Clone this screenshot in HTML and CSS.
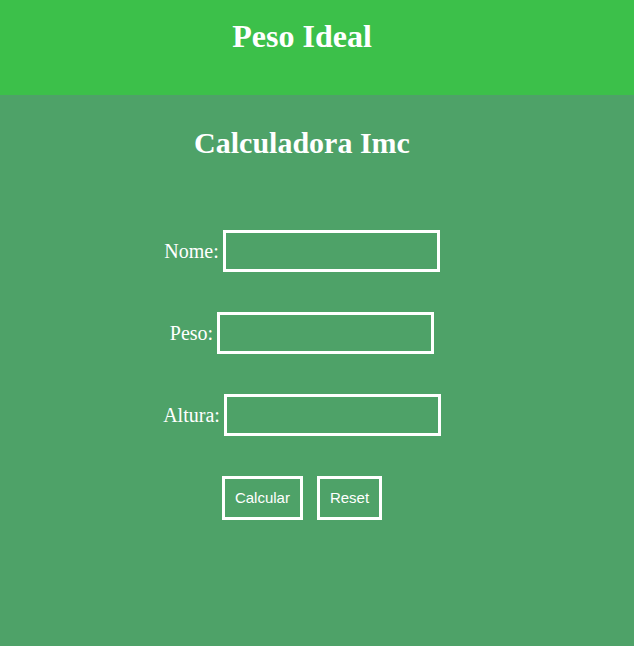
FILE: index.html
```html
<!DOCTYPE html>
<html lang="pt">
<head>
<meta charset="utf-8">
<title>Peso Ideal</title>
<link rel="stylesheet" href="styles.css">
</head>
<body>
<header class="topbar">
  <h1 class="title">Peso Ideal</h1>
</header>
<main class="content">
  <h2 class="subtitle">Calculadora Imc</h2>
  <form class="form">
    <div class="row">
      <label class="label" for="nome">Nome:</label>
      <input class="field" id="nome" type="text">
    </div>
    <div class="row">
      <label class="label" for="peso">Peso:</label>
      <input class="field" id="peso" type="text">
    </div>
    <div class="row">
      <label class="label" for="altura">Altura:</label>
      <input class="field" id="altura" type="text">
    </div>
    <div class="actions">
      <button class="btn" type="button">Calcular</button>
      <button class="btn" type="reset">Reset</button>
    </div>
  </form>
</main>
</body>
</html>
```

FILE: styles.css
```css
html, body {
  margin: 0;
  padding: 0;
  height: 100%;
}
body {
  background: #4ea268;
  font-family: "Liberation Serif", "Times New Roman", serif;
  color: #ffffff;
}
.topbar {
  background: #3cc04a;
  height: 95px;
  box-sizing: border-box;
  padding: 18px 30px 0 0;
  text-align: center;
}
.title {
  margin: 0;
  font-size: 32px;
  font-weight: bold;
  line-height: 37px;
}
.content {
  padding: 30px 30px 0 0;
  text-align: center;
}
.subtitle {
  margin: 0;
  font-size: 30px;
  font-weight: bold;
  line-height: 35px;
}
.form {
  margin-top: 70px;
  display: flex;
  flex-direction: column;
  align-items: center;
  gap: 40px;
}
.row {
  display: flex;
  align-items: center;
  justify-content: center;
  gap: 4px;
}
.label {
  font-size: 20px;
  line-height: 23px;
}
.field {
  width: 217px;
  height: 42px;
  box-sizing: border-box;
  border: 3px solid #ffffff;
  background: transparent;
  color: #ffffff;
  margin: 0;
  padding: 0 4px;
  font-size: 16px;
  outline: none;
}
.actions {
  display: flex;
  gap: 14px;
  justify-content: center;
}
.btn {
  font-family: "Liberation Sans", Arial, sans-serif;
  font-size: 15px;
  line-height: 18px;
  color: #ffffff;
  background: transparent;
  border: 3px solid #ffffff;
  padding: 10px 10px;
  margin: 0;
  cursor: pointer;
}
```
